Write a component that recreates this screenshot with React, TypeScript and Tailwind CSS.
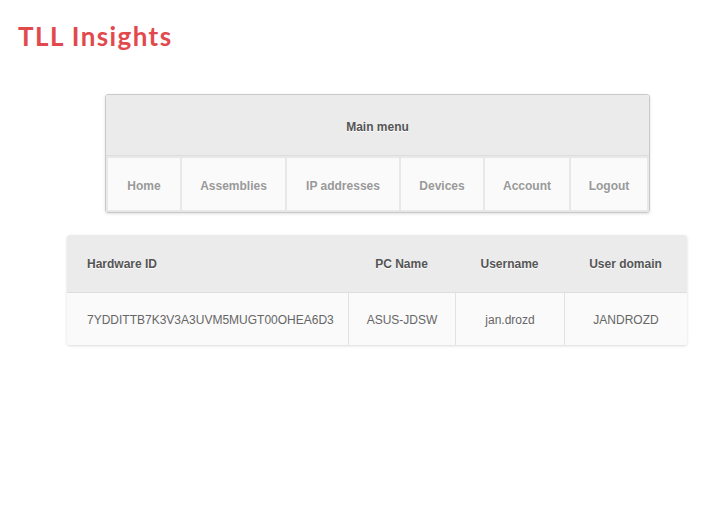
const MENU_ITEMS = [
  { label: "Home", width: "w-[72px]" },
  { label: "Assemblies", width: "w-[103px]" },
  { label: "IP addresses", width: "w-[112px]" },
  { label: "Devices", width: "w-[82px]" },
  { label: "Account", width: "w-[84px]" },
  { label: "Logout", width: "w-[76px]" },
];

const COLUMNS = [
  { label: "Hardware ID", align: "text-left pl-[20px]" },
  { label: "PC Name", align: "text-center" },
  { label: "Username", align: "text-center" },
  { label: "User domain", align: "text-center" },
];

const ROW = ["7YDDITTB7K3V3A3UVM5MUGT00OHEA6D3", "ASUS-JDSW", "jan.drozd", "JANDROZD"];

export default function App() {
  return (
    <div className="min-h-[506px] w-[710px] bg-white font-['Liberation_Sans',Arial,sans-serif] text-[12px]">
      <h1 className="pl-[18px] pt-[21px] font-['Lato',sans-serif] text-[26px] font-bold leading-[30px] tracking-[1.4px] text-[#e2494c]">
        TLL Insights
      </h1>

      <div className="ml-[105px] mt-[43px] w-[545px] overflow-hidden rounded-[3px] border border-[#c9c9c9] shadow-[0_1px_3px_rgba(0,0,0,0.12)]">
        <div className="flex h-[61px] items-center justify-center border-b border-[#dddddd] bg-[#ebebeb] pt-[3px] font-bold text-[#555] [text-shadow:0_1px_0_#fff]">
          Main menu
        </div>
        <div className="flex gap-[2px] bg-[#e8e8e8] p-[2px]">
          {MENU_ITEMS.map((item) => (
            <div
              key={item.label}
              className={`flex h-[52px] ${item.width} items-center justify-center whitespace-nowrap bg-[#fafafa] pt-[3px] font-bold text-[#999] [text-shadow:0_1px_0_#fff]`}
            >
              {item.label}
            </div>
          ))}
        </div>
      </div>

      <div className="ml-[67px] mt-[22px] w-[620px] overflow-hidden rounded-[3px] shadow-[0_1px_3px_rgba(0,0,0,0.15)]">
        <div className="grid h-[58px] grid-cols-[281px_107px_109px_123px] items-center border-b border-[#dedede] bg-[#ebebeb] pt-[1px] font-bold text-[#555] [text-shadow:0_1px_0_#fff]">
          {COLUMNS.map((col) => (
            <div key={col.label} className={col.align}>
              {col.label}
            </div>
          ))}
        </div>
        <div className="grid h-[52px] grid-cols-[281px_107px_109px_123px] bg-[#fafafa] text-[#666]">
          {ROW.map((cell, i) => (
            <div
              key={cell}
              className={
                i === 0
                  ? "flex items-center pl-[20px] pt-[2px]"
                  : "flex items-center justify-center border-l border-[#e2e2e2] pt-[2px]"
              }
            >
              {cell}
            </div>
          ))}
        </div>
      </div>
    </div>
  );
}
